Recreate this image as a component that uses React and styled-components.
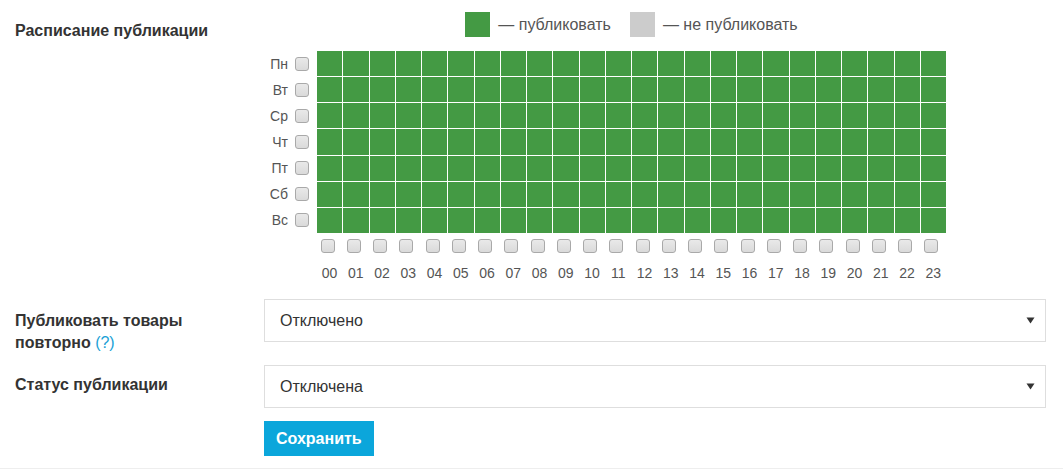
import styled, { createGlobalStyle } from "styled-components";

const GlobalStyle = createGlobalStyle`
  html, body {
    margin: 0;
    padding: 0;
    background: #fff;
  }
  body {
    font-family: "Liberation Sans", Arial, sans-serif;
    color: #333;
  }
`;

const days = ["Пн", "Вт", "Ср", "Чт", "Пт", "Сб", "Вс"];
const hours = Array.from({ length: 24 }, (_, i) => String(i).padStart(2, "0"));

function App() {
    return (
        <>
            <GlobalStyle />
            <Form>
                <FormRow>
                    <Label $top={8}>Расписание публикации</Label>
                    <Schedule>
                        <Legend>
                            <LegendItem>
                                <Swatch $on />
                                — публиковать
                            </LegendItem>
                            <LegendItem>
                                <Swatch />
                                — не публиковать
                            </LegendItem>
                        </Legend>
                        <Matrix>
                            <DayColumn>
                                {days.map((d) => (
                                    <DayLabel key={d}>
                                        <span>{d}</span>
                                        <Check />
                                    </DayLabel>
                                ))}
                            </DayColumn>
                            <CellGrid>
                                {days.map((d) =>
                                    hours.map((h) => <Cell key={d + h} $on />)
                                )}
                            </CellGrid>
                        </Matrix>
                        <HourRow>
                            {hours.map((h) => (
                                <HourCol key={h}>
                                    <Check $shift />
                                    <HourLabel>{h}</HourLabel>
                                </HourCol>
                            ))}
                        </HourRow>
                    </Schedule>
                </FormRow>

                <FormRow $mt={18}>
                    <Label $top={11}>
                        Публиковать товары
                        <br />
                        повторно <Help>(?)</Help>
                    </Label>
                    <Select>
                        <span>Отключено</span>
                        <Arrow />
                    </Select>
                </FormRow>

                <FormRow $mt={11}>
                    <Label $top={9}>Статус публикации</Label>
                    <Select>
                        <span>Отключена</span>
                        <Arrow />
                    </Select>
                </FormRow>

                <FormRow $mt={13}>
                    <Label />
                    <div>
                        <SaveButton>Сохранить</SaveButton>
                    </div>
                </FormRow>
            </Form>
        </>
    );
}
export default App;

function Arrow() {
    return (
        <svg width="9" height="7" viewBox="0 0 9 7">
            <path d="M0.5 0.5 H8.5 L4.5 6.5 Z" fill="#333" />
        </svg>
    );
}

const Form = styled.div`
    width: 1063px;
    box-sizing: border-box;
    padding: 12px 17px 12px 15px;
    border-bottom: 1px solid #eee;
`;

const FormRow = styled.div`
    display: grid;
    grid-template-columns: 249px 1fr;
    align-items: start;
    margin-top: ${(p) => (p.$mt ? p.$mt + "px" : "0")};
`;

const Label = styled.div`
    padding-top: ${(p) => (p.$top ? p.$top + "px" : "0")};
    padding-right: 20px;
    font-size: 16px;
    font-weight: 700;
    line-height: 22px;
    color: #333;
`;

const Help = styled.span`
    font-weight: 400;
    color: #1a9fd6;
`;

const Schedule = styled.div`
    display: flex;
    flex-direction: column;
`;

const Legend = styled.div`
    display: flex;
    justify-content: center;
    gap: 19px;
    width: 629px;
    margin-left: 53px;
    height: 25px;
`;

const LegendItem = styled.div`
    display: flex;
    align-items: center;
    gap: 8px;
    font-size: 16px;
    color: #555;
`;

const Swatch = styled.span`
    width: 25px;
    height: 25px;
    background: ${(p) => (p.$on ? "#449a44" : "#cccccc")};
`;

const Matrix = styled.div`
    display: flex;
    margin-top: 14px;
`;

const DayColumn = styled.div`
    width: 53px;
    height: 182px;
    display: grid;
    grid-template-rows: repeat(7, 1fr);
    row-gap: 1px;
`;

const DayLabel = styled.div`
    display: flex;
    align-items: center;
    justify-content: flex-end;
    gap: 7px;
    padding-right: 8px;
    font-size: 14px;
    color: #555;
`;

const Check = styled.span`
    display: block;
    box-sizing: border-box;
    width: 14px;
    height: 14px;
    border: 1px solid #a9a9a9;
    border-radius: 3px;
    background: linear-gradient(#e9e9e9, #dadada);
    margin-left: ${(p) => (p.$shift ? "-4px" : "0")};
`;

const CellGrid = styled.div`
    width: 629px;
    height: 182px;
    display: grid;
    grid-template-columns: repeat(24, 1fr);
    grid-template-rows: repeat(7, 1fr);
    gap: 1px;
`;

const Cell = styled.div`
    background: ${(p) => (p.$on ? "#449a44" : "#cccccc")};
`;

const HourRow = styled.div`
    display: grid;
    grid-template-columns: repeat(24, 1fr);
    column-gap: 1px;
    width: 629px;
    margin-left: 53px;
    margin-top: 6px;
`;

const HourCol = styled.div`
    display: flex;
    flex-direction: column;
    align-items: center;
    gap: 12px;
`;

const HourLabel = styled.span`
    font-size: 14px;
    line-height: 16px;
    color: #555;
`;

const Select = styled.div`
    display: flex;
    align-items: center;
    justify-content: space-between;
    height: 43px;
    box-sizing: border-box;
    border: 1px solid #dedede;
    padding: 0 10px 0 15px;
    font-size: 16px;
    color: #333;
    background: #fff;
`;

const SaveButton = styled.button`
    height: 35px;
    padding: 0 12px;
    border: none;
    background: #0ba6db;
    color: #fff;
    font-family: "Liberation Sans", Arial, sans-serif;
    font-size: 16px;
    font-weight: 700;
    cursor: pointer;
`;
